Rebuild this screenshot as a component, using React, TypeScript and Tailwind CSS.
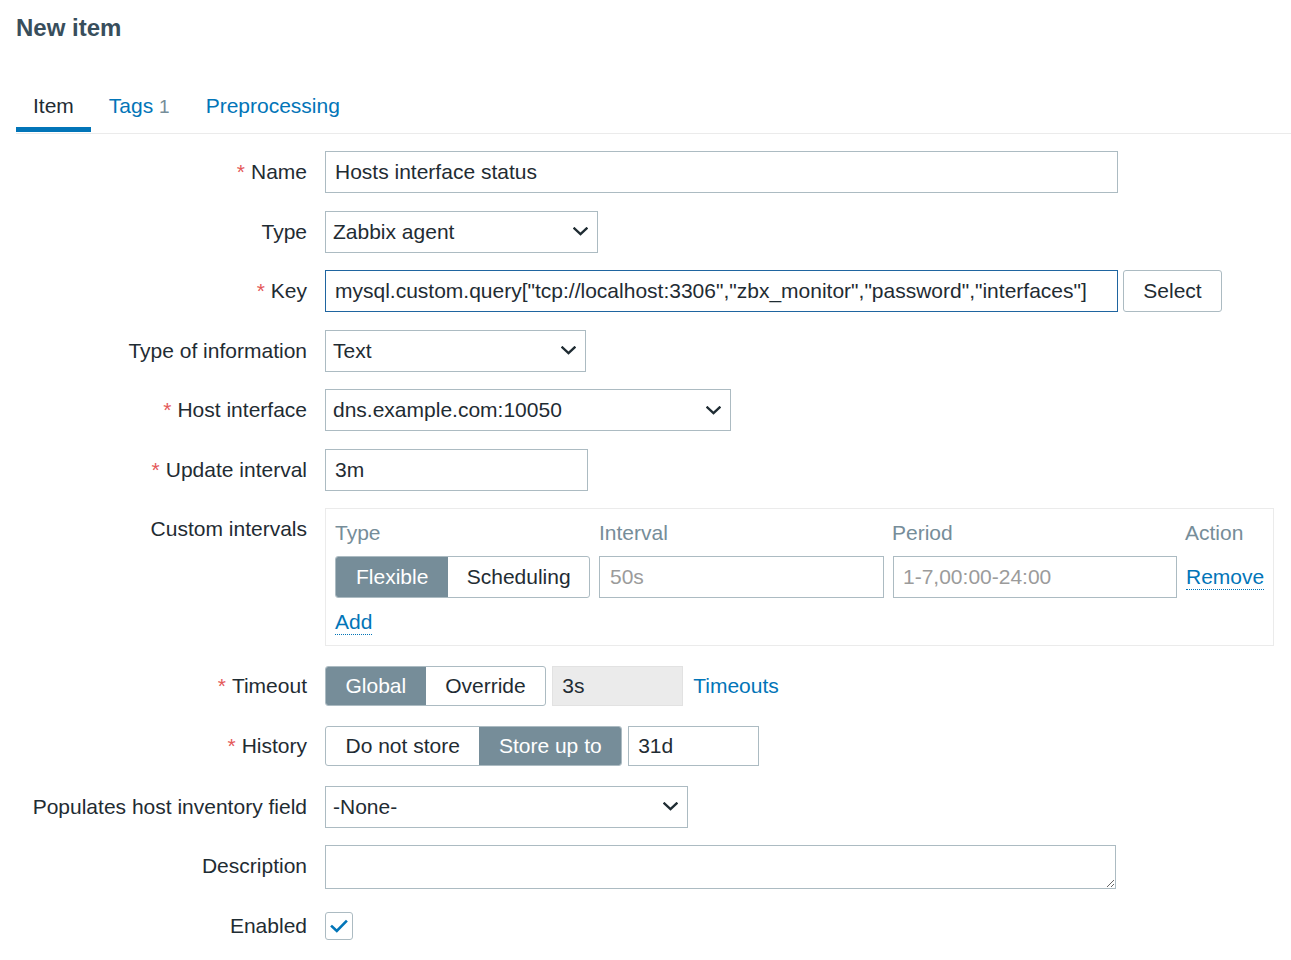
import React from "react";

const Chevron = () => (
  <svg width="15" height="9" viewBox="0 0 15 9" className="shrink-0">
    <path d="M1.5 1.5 L7.5 7.2 L13.5 1.5" fill="none" stroke="#1f2c33" strokeWidth="2.4" strokeLinecap="square" />
  </svg>
);

const Req = () => <span className="text-[#e45959] mr-[6px]">*</span>;

const Label = ({ text, req }: { text: string; req?: boolean }) => (
  <div className="h-[42px] flex items-center justify-end whitespace-nowrap text-[#1f2c33]">
    {req && <Req />}
    <span>{text}</span>
  </div>
);

const Select = ({ value, w }: { value: string; w: string }) => (
  <div className={`${w} h-[42px] border border-[#acbbc2] bg-white flex items-center justify-between pl-[7px] pr-[9px]`}>
    <span>{value}</span>
    <Chevron />
  </div>
);

export default function App() {
  return (
    <div className="min-h-[960px] bg-white text-[#1f2c33] text-[21px] leading-[24px]" style={{ fontFamily: '"Liberation Sans", Arial, sans-serif' }}>
      <div className="pl-[16px]">
        <h1 className="pt-[14px] text-[24px] leading-[28px] font-bold text-[#384e5c]">New item</h1>
        <div className="mt-[42px] flex border-b border-[#ebebeb] h-[50px]">
          <div className="relative px-[17px] pt-[10px] text-[#1f2c33]">
            Item
            <div className="absolute left-0 right-0 bottom-[1px] h-[5px] bg-[#0275b8]" />
          </div>
          <div className="pl-[18px] pr-[19px] pt-[10px] text-[#0275b8]">
            Tags <span className="text-[#768d99] text-[19px]">1</span>
          </div>
          <div className="px-[17px] pt-[10px] text-[#0275b8]">Preprocessing</div>
        </div>

        <div className="mt-[17px] grid grid-cols-[291px_1fr] gap-x-[18px]">
          <Label text="Name" req />
          <div className="w-[793px] h-[42px] border border-[#acbbc2] flex items-center px-[9px]">Hosts interface status</div>

          <div className="col-span-2 h-[17.5px]" />
          <Label text="Type" />
          <Select value="Zabbix agent" w="w-[273px]" />

          <div className="col-span-2 h-[17.5px]" />
          <Label text="Key" req />
          <div className="flex items-center gap-[5px]">
            <div className="w-[793px] h-[42px] border border-[#1f65a0] flex items-center px-[9px] whitespace-nowrap">
              mysql.custom.query["tcp://localhost:3306","zbx_monitor","password","interfaces"]
            </div>
            <div className="w-[99px] h-[42px] border border-[#acbbc2] rounded-[3px] flex items-center justify-center">Select</div>
          </div>

          <div className="col-span-2 h-[17.5px]" />
          <Label text="Type of information" />
          <Select value="Text" w="w-[261px]" />

          <div className="col-span-2 h-[17.5px]" />
          <Label text="Host interface" req />
          <Select value="dns.example.com:10050" w="w-[406px]" />

          <div className="col-span-2 h-[17.5px]" />
          <Label text="Update interval" req />
          <div className="w-[263px] h-[42px] border border-[#acbbc2] flex items-center px-[9px]">3m</div>

          <div className="col-span-2 h-[17.5px]" />
          <Label text="Custom intervals" />
          <div className="w-[949px] border border-[#ebebeb] pt-[12px] pb-[10px] pl-[9px] pr-[9px]">
            <div className="grid grid-cols-[255px_284px_284px_auto] gap-x-[9px] text-[#768d99]">
              <div>Type</div>
              <div>Interval</div>
              <div>Period</div>
              <div>Action</div>
            </div>
            <div className="mt-[11px] grid grid-cols-[255px_285px_284px_auto] gap-x-[9px] items-center">
              <div className="flex h-[42px] border border-[#acbbc2] rounded-[3px] overflow-hidden">
                <div className="bg-[#768d99] text-white flex items-center px-[20px]">Flexible</div>
                <div className="flex-1 flex items-center justify-center">Scheduling</div>
              </div>
              <div className="h-[42px] border border-[#acbbc2] flex items-center px-[10px] text-[#9b9b9b]">50s</div>
              <div className="h-[42px] border border-[#acbbc2] flex items-center px-[9px] text-[#9b9b9b]">1-7,00:00-24:00</div>
              <div>
                <span className="text-[#0275b8] border-b border-dotted border-[#0275b8] pb-[1px]">Remove</span>
              </div>
            </div>
            <div className="mt-[12px] h-[25px]">
              <span className="text-[#0275b8] border-b border-dotted border-[#0275b8] pb-[1px]">Add</span>
            </div>
          </div>

          <div className="col-span-2 h-[19px]" />
          <Label text="Timeout" req />
          <div className="flex items-center h-[42px]">
            <div className="flex h-[40px] border border-[#acbbc2] rounded-[3px] overflow-hidden">
              <div className="bg-[#768d99] text-white flex items-center px-[19.5px]">Global</div>
              <div className="flex items-center px-[19.5px]">Override</div>
            </div>
            <div className="ml-[6px] w-[131px] h-[40px] bg-[#ebebeb] border border-[#e2e2e2] flex items-center px-[9px]">3s</div>
            <div className="ml-[10px] text-[#0275b8]">Timeouts</div>
          </div>

          <div className="col-span-2 h-[18px]" />
          <Label text="History" req />
          <div className="flex items-center h-[42px]">
            <div className="flex h-[40px] border border-[#acbbc2] rounded-[3px] overflow-hidden">
              <div className="flex items-center px-[19.5px]">Do not store</div>
              <div className="bg-[#768d99] text-white flex items-center px-[19.5px]">Store up to</div>
            </div>
            <div className="ml-[6px] w-[131px] h-[40px] border border-[#acbbc2] flex items-center px-[9px]">31d</div>
          </div>

          <div className="col-span-2 h-[18.5px]" />
          <Label text="Populates host inventory field" />
          <Select value="-None-" w="w-[363px]" />

          <div className="col-span-2 h-[17.5px]" />
          <Label text="Description" />
          <textarea className="block w-[791px] h-[44px] border border-[#acbbc2] outline-none" />

          <div className="col-span-2 h-[16px]" />
          <Label text="Enabled" />
          <div className="h-[42px] flex items-center">
            <div className="w-[28px] h-[28px] border border-[#acbbc2] rounded-[3px] flex items-center justify-center">
              <svg width="18" height="14" viewBox="0 0 18 14">
                <path d="M2 7.5 L6.8 12 L16 2.5" fill="none" stroke="#0275b8" strokeWidth="2.6" strokeLinecap="square" />
              </svg>
            </div>
          </div>
        </div>
      </div>
    </div>
  );
}
